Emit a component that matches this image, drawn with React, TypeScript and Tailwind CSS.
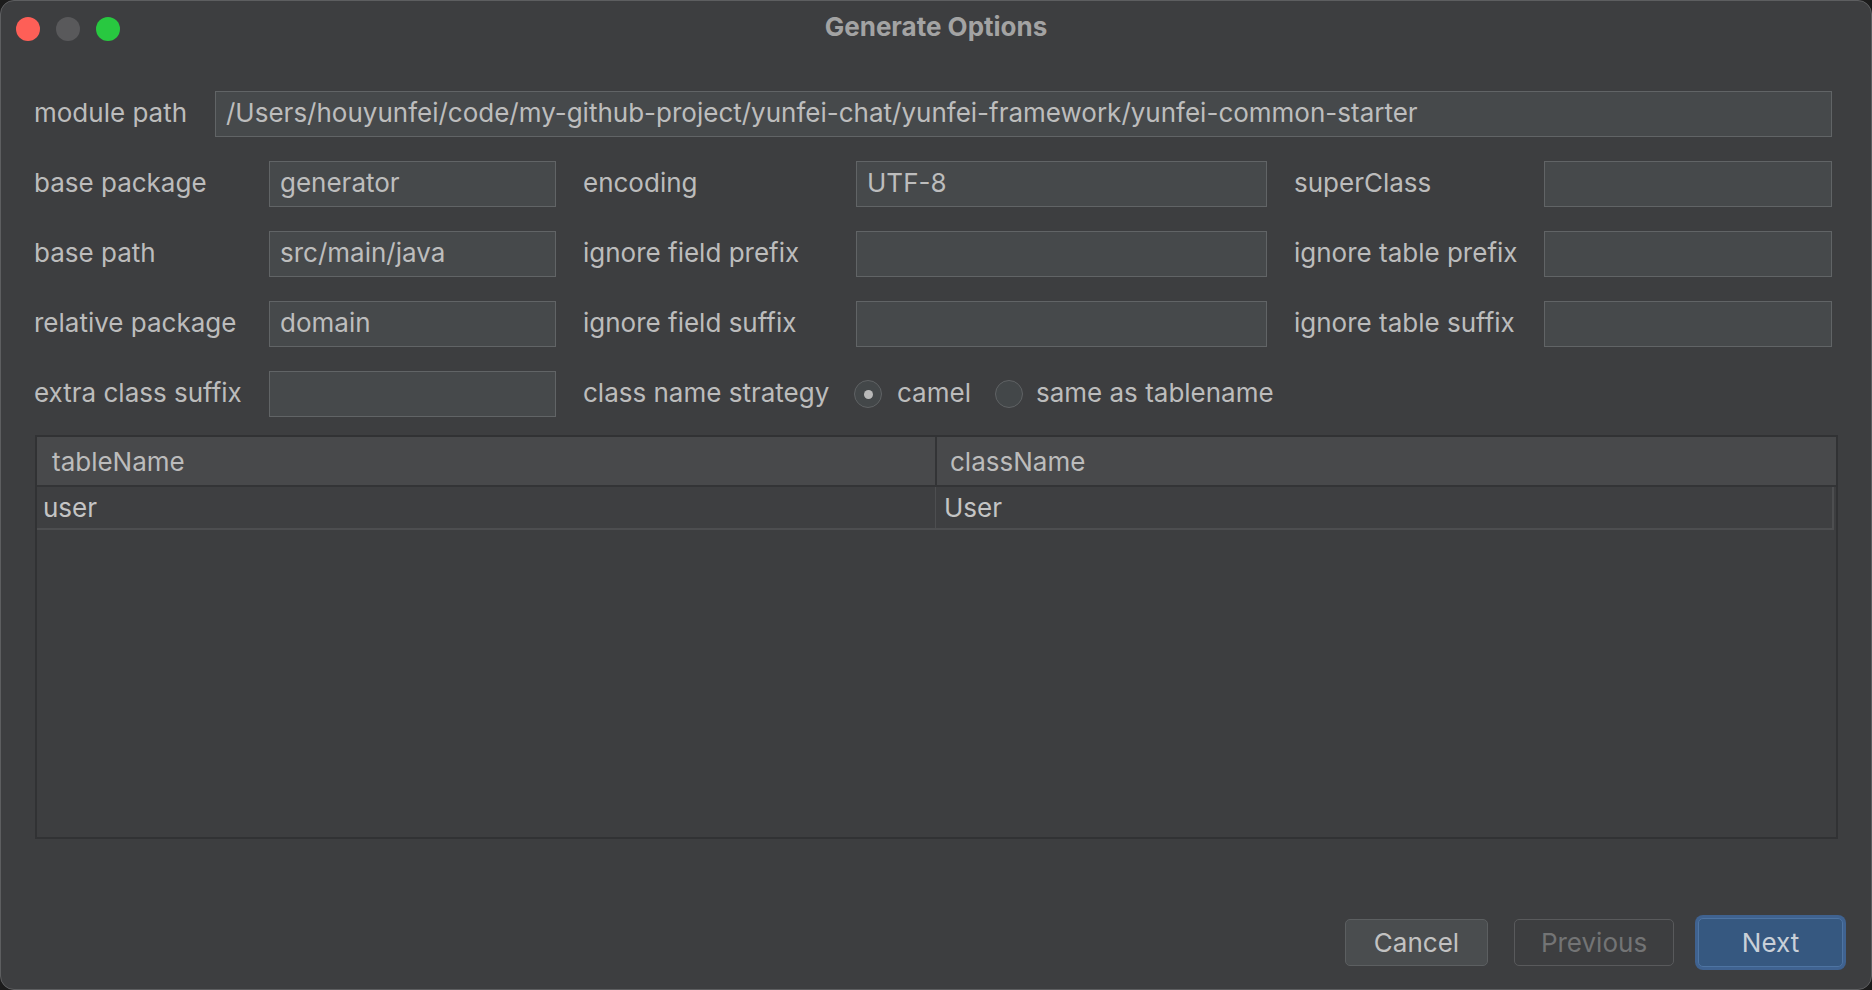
import React from "react";

const font = { fontFamily: "Inter, 'Noto Sans', sans-serif" };

function Field({ value = "", w }: { value?: string; w: string }) {
  return (
    <div
      className={`${w} h-[46px] shrink-0 border border-[#616466] bg-[#46494b] flex items-center pl-[10px] pb-[3px] text-[26px] text-[#bdbdbd] whitespace-nowrap overflow-hidden`}
    >
      {value}
    </div>
  );
}

function Label({ text, w, ml = "" }: { text: string; w: string; ml?: string }) {
  return (
    <div className={`${w} ${ml} shrink-0 pb-[3px] text-[26px] text-[#bcbcbc] whitespace-nowrap`}>{text}</div>
  );
}

function Radio({ checked }: { checked: boolean }) {
  return (
    <div className="w-[28px] h-[28px] rounded-full border-[1.5px] border-[#5f6264] bg-[#434749] flex items-center justify-center shrink-0">
      {checked && <div className="w-[9px] h-[9px] rounded-full bg-[#b9b9b9]" />}
    </div>
  );
}

export default function App() {
  return (
    <div className="w-[1872px] h-[990px] bg-[#1c1c1c]" style={font}>
      <div className="w-full h-full rounded-[14px] border border-[#5d5e60] bg-[#3d3e40] flex flex-col overflow-hidden">
        {/* title bar */}
        <div className="h-[52px] grid grid-cols-[1fr_auto_1fr] items-center shrink-0">
          <div className="flex items-center gap-[16px] pl-[15px] pt-[3px]">
            <div className="w-[24px] h-[24px] rounded-full bg-[#fe5f57]" />
            <div className="w-[24px] h-[24px] rounded-full bg-[#59595b]" />
            <div className="w-[24px] h-[24px] rounded-full bg-[#28c840]" />
          </div>
          <div className="text-[26px] font-bold text-[#a3a3a3] pb-[2px]">Generate Options</div>
          <div />
        </div>

        {/* form */}
        <div className="flex flex-col gap-[24px] pl-[33px] pt-[38px] shrink-0">
          <div className="flex items-center h-[46px]">
            <Label text="module path" w="w-[181px]" />
            <Field w="w-[1617px]" value="/Users/houyunfei/code/my-github-project/yunfei-chat/yunfei-framework/yunfei-common-starter" />
          </div>
          <div className="flex items-center h-[46px]">
            <Label text="base package" w="w-[235px]" />
            <Field w="w-[287px]" value="generator" />
            <Label text="encoding" w="w-[273px]" ml="ml-[27px]" />
            <Field w="w-[411px]" value="UTF-8" />
            <Label text="superClass" w="w-[250px]" ml="ml-[27px]" />
            <Field w="w-[288px]" />
          </div>
          <div className="flex items-center h-[46px]">
            <Label text="base path" w="w-[235px]" />
            <Field w="w-[287px]" value="src/main/java" />
            <Label text="ignore field prefix" w="w-[273px]" ml="ml-[27px]" />
            <Field w="w-[411px]" />
            <Label text="ignore table prefix" w="w-[250px]" ml="ml-[27px]" />
            <Field w="w-[288px]" />
          </div>
          <div className="flex items-center h-[46px]">
            <Label text="relative package" w="w-[235px]" />
            <Field w="w-[287px]" value="domain" />
            <Label text="ignore field suffix" w="w-[273px]" ml="ml-[27px]" />
            <Field w="w-[411px]" />
            <Label text="ignore table suffix" w="w-[250px]" ml="ml-[27px]" />
            <Field w="w-[288px]" />
          </div>
          <div className="flex items-center h-[46px]">
            <Label text="extra class suffix" w="w-[235px]" />
            <Field w="w-[287px]" />
            <Label text="class name strategy" w="w-[271px]" ml="ml-[27px]" />
            <Radio checked />
            <span className="ml-[15px] pb-[3px] text-[26px] text-[#bcbcbc]">camel</span>
            <div className="ml-[24px]">
              <Radio checked={false} />
            </div>
            <span className="ml-[13px] pb-[3px] text-[26px] text-[#bcbcbc]">same as tablename</span>
          </div>
        </div>

        {/* table */}
        <div className="ml-[34px] mr-[33px] mt-[18px] h-[404px] border-2 border-[#313234] bg-[#3d3e40] flex flex-col shrink-0">
          <div className="h-[50px] flex bg-[#48494b] border-b-2 border-[#333436] shrink-0">
            <div className="w-[900px] border-r-2 border-[#333436] flex items-center pl-[15px] text-[26px] text-[#bcbcbc]">
              tableName
            </div>
            <div className="flex-1 flex items-center pl-[13px] text-[26px] text-[#bcbcbc]">className</div>
          </div>
          <div className="h-[43px] flex bg-[#3e3f41] border-b-2 border-[#4d4e50] mr-[2px] shrink-0">
            <div className="w-[899px] border-r border-[#4d4e50] flex items-center pl-[6px] text-[26px] text-[#c4c4c4]">
              user
            </div>
            <div className="flex-1 flex items-center pl-[8px] text-[26px] text-[#c4c4c4] border-r-2 border-[#4d4e50]">User</div>
          </div>
        </div>

        {/* buttons */}
        <div className="flex-1 flex items-end justify-end pr-[25px] pb-[19px]">
          <div className="flex items-center">
            <div className="w-[143px] h-[47px] rounded-[5px] border border-[#5c5f61] bg-[#4a4d4f] flex items-center justify-center text-[26px] text-[#c2c2c2]">
              Cancel
            </div>
            <div className="ml-[26px] w-[160px] h-[47px] rounded-[5px] border border-[#595a5c] flex items-center justify-center text-[26px] text-[#737475]">
              Previous
            </div>
            <div className="ml-[21px] w-[151px] h-[55px] rounded-[8px] bg-[#3f6290] p-[3px]">
              <div className="w-full h-full rounded-[5px] border border-[#4e74a2] bg-[#365880] flex items-center justify-center text-[26px] text-[#c9d0d8]">
                Next
              </div>
            </div>
          </div>
        </div>
      </div>
    </div>
  );
}
